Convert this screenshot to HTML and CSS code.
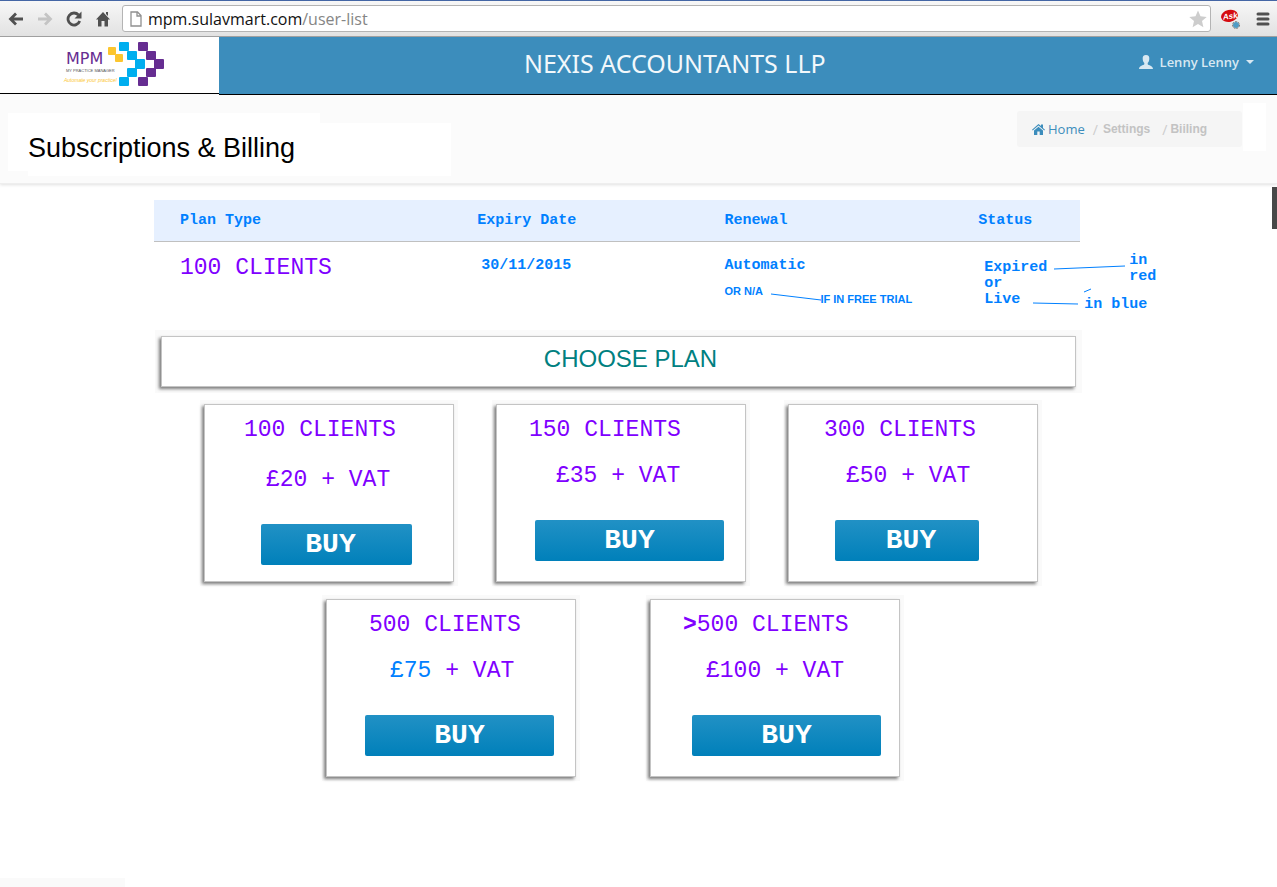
FILE: index.html
```html
<!DOCTYPE html>
<html lang="en">
<head>
<meta charset="utf-8">
<title>Subscriptions &amp; Billing</title>
<link rel="stylesheet" href="styles.css">
</head>
<body>
<div class="browser">
  <button class="browser-btn" aria-label="Back"><svg width="16" height="16" viewBox="0 0 16 16"><path d="M15 8H3M8 2.500L2.500 8L8 13.500" fill="none" stroke="#505050" stroke-width="2.800"/></svg></button>
  <button class="browser-btn" aria-label="Forward"><svg width="16" height="16" viewBox="0 0 16 16"><path d="M1 8H13M8 2.500L13.500 8L8 13.500" fill="none" stroke="#c4c4c4" stroke-width="2.800"/></svg></button>
  <button class="browser-btn" aria-label="Reload"><svg width="16" height="16" viewBox="0 0 16 16"><path d="M12.500 4A6 6 0 1 0 13.700 10" fill="none" stroke="#505050" stroke-width="2.800"/><path d="M15.500 0.500V7.500H8.500Z" fill="#505050"/></svg></button>
  <button class="browser-btn" aria-label="Home page"><svg width="16" height="16" viewBox="0 0 16 16"><path d="M8 1L15 8.500H13V15.500H9.500V10H6.500V15.500H3V8.500H1ZM11 1H13V5L11 3Z" fill="#505050"/></svg></button>
  <div class="address">
    <svg width="12" height="16" viewBox="0 0 12 16"><path d="M1 1H7.500L11 4.500V15H1ZM7 1V5H11" fill="#fff" stroke="#909090" stroke-width="1.300"/></svg>
    <span class="url">mpm.sulavmart.com<span class="url-path">/user-list</span></span>
    <svg class="star" width="18" height="18" viewBox="0 0 18 18"><path d="M9 0.500L11.500 6.300L17.700 6.900L13 11L14.400 17.200L9 13.900L3.600 17.200L5 11L0.300 6.900L6.500 6.300Z" fill="#cdcdcd"/></svg>
  </div>
  <svg class="ask" width="20" height="20" viewBox="0 0 20 20"><ellipse cx="8.500" cy="7" rx="8.500" ry="6" fill="#d50b10" transform="rotate(-12 8 7)"/><text x="2" y="10" class="ask-text" transform="rotate(-8 8 8)">Ask</text><circle cx="15" cy="16" r="3" fill="#4f9cc5"/><circle cx="15" cy="16" r="3.500" fill="none" stroke="#777" stroke-width="1" stroke-dasharray="2 1"/></svg>
  <button class="browser-btn" aria-label="Menu"><svg width="14" height="14" viewBox="0 0 14 14"><path d="M2 2H12M2 7H12M2 12H12" stroke="#505050" stroke-width="3" stroke-linecap="round"/></svg></button>
</div>

<header class="header">
  <a class="brand" href="#" aria-label="MPM My Practice Manager">
    <svg width="104" height="48" viewBox="62 40 104 48">
      <g fill="#fcc62f"><rect x="108" y="47" width="8" height="8" rx="1"/><rect x="115" y="54" width="8" height="8" rx="1"/></g>
      <g fill="#00aeef"><rect x="119" y="42" width="10" height="9" rx="1"/><rect x="127" y="51" width="10" height="9" rx="1"/><rect x="135" y="59" width="10" height="10" rx="1"/><rect x="127" y="68" width="10" height="9" rx="1"/><rect x="119" y="77" width="10" height="9" rx="1"/></g>
      <g fill="#662d91"><rect x="138" y="42" width="10" height="9" rx="1"/><rect x="146" y="51" width="10" height="9" rx="1"/><rect x="154" y="59" width="10" height="10" rx="1"/><rect x="146" y="68" width="10" height="9" rx="1"/><rect x="138" y="77" width="10" height="9" rx="1"/></g>
      <text class="logo-name" x="66" y="64">MPM</text>
      <text class="logo-sub" x="66" y="72">MY PRACTICE MANAGER</text>
      <text class="logo-tag" x="64" y="82">Automate your practice!</text>
    </svg>
  </a>
  <div class="topbar">
    <div class="company">NEXIS ACCOUNTANTS LLP</div>
    <button class="user">
      <svg width="14" height="14" viewBox="0 0 14 14"><path d="M7 0C9.500 0 10.500 1.600 10.300 4C10.200 6 9.500 7.200 8.700 8V9.300C9.500 10.500 13.800 10.600 14 14H0C0.200 10.600 4.500 10.500 5.300 9.300V8C4.500 7.200 3.800 6 3.700 4C3.500 1.600 4.500 0 7 0Z" fill="#d8e8f2"/></svg>
      <span>Lenny Lenny</span>
      <svg width="8" height="4" viewBox="0 0 8 4"><path d="M0 0H8L4 4Z" fill="#d8e8f2"/></svg>
    </button>
  </div>
</header>

<section class="page-head">
  <h1 class="title">Subscriptions &amp; Billing</h1>
  <div class="crumb-area">
    <nav class="crumbs" aria-label="Breadcrumb">
      <a class="crumb-home" href="#"><svg width="13" height="11" viewBox="0 0 13 11"><path d="M6.500 0L9 2V0.500H11V4L13 5.700L12.300 6.500L6.500 1.600L0.700 6.500L0 5.700ZM6.500 2.700L11 6.500V11H7.700V7.500H5.300V11H2V6.500Z" fill="#3c8dbc"/></svg> Home</a>
      <span class="sep">/</span>
      <span class="crumb">Settings</span>
      <span class="sep sep-last">/</span>
      <span class="crumb">Biiling</span>
    </nav>
  </div>
</section>

<main class="content">
  <div class="scroll-thumb"></div>
  <table class="plan-table">
    <thead>
      <tr><th class="col-plan">Plan Type</th><th class="col-expiry">Expiry Date</th><th class="col-renewal">Renewal</th><th class="col-status">Status</th></tr>
    </thead>
    <tbody>
      <tr>
        <td><span class="plan-name">100 CLIENTS</span></td>
        <td class="inset">30/11/2015</td>
        <td>
          <div>Automatic</div>
          <div class="remark">OR N/A</div>
          <svg class="note-line line-trial" width="50" height="8" viewBox="0 0 50 8"><path d="M0 1L50 7"/></svg>
          <span class="note remark note-trial">IF IN FREE TRIAL</span>
        </td>
        <td class="status">
          Expired<br>or<br>Live
          <svg class="note-line line-status" width="100" height="44" viewBox="0 0 100 44"><path d="M21 7L92 4M51 30L58 27M0 41L45 42"/></svg>
          <span class="note note-red">in<br>red</span>
          <span class="note note-blue">in blue</span>
        </td>
      </tr>
    </tbody>
  </table>

  <h2 class="choose">CHOOSE PLAN</h2>

  <div class="plans">
    <article class="card card-100">
      <h3 class="card-title">100 CLIENTS</h3>
      <p class="price">£20 + VAT</p>
      <button class="buy">BUY</button>
    </article>
    <article class="card card-150">
      <h3 class="card-title">150 CLIENTS</h3>
      <p class="price">£35 + VAT</p>
      <button class="buy">BUY</button>
    </article>
    <article class="card card-300">
      <h3 class="card-title">300 CLIENTS</h3>
      <p class="price">£50 + VAT</p>
      <button class="buy">BUY</button>
    </article>
  </div>
  <div class="plans plans-large">
    <article class="card card-500">
      <h3 class="card-title">500 CLIENTS</h3>
      <p class="price"><span class="accent">£75</span> + VAT</p>
      <button class="buy">BUY</button>
    </article>
    <article class="card card-over">
      <h3 class="card-title"><b>&gt;</b>500 CLIENTS</h3>
      <p class="price">£100 + VAT</p>
      <button class="buy">BUY</button>
    </article>
  </div>
  <div class="foot-strip"></div>
</main>
</body>
</html>
```

FILE: styles.css
```css
* { box-sizing: border-box; }

body {
  margin: 0;
  min-height: 100vh;
  display: flex;
  flex-direction: column;
  background: #fff;
  font-family: "Liberation Sans", Arial, sans-serif;
}

button { font: inherit; color: inherit; border: 0; padding: 0; background: none; cursor: pointer; }
a { text-decoration: none; }
h1, h2, h3, p { margin: 0; font-weight: 400; }
svg { display: block; flex: none; }

/* Browser toolbar */
.browser {
  display: flex;
  align-items: center;
  gap: 13px;
  height: 37px;
  padding: 0 7px 0 8px;
  border-top: 1px solid #4466a5;
  border-bottom: 1px solid #a0a0a0;
  background: linear-gradient(#f7f7f7, #e2e2e2);
}
.address {
  flex: 1;
  display: flex;
  align-items: center;
  gap: 6px;
  height: 27px;
  margin-left: -2px;
  padding: 0 3px 0 7px;
  border: 1px solid #b4b4b4;
  border-radius: 3px;
  background: #fff;
}
.url { flex: 1; font: 16px "Open Sans", sans-serif; color: #111; }
.url-path { color: #858585; }
.ask { margin: 0 2px 0 -3px; }
.ask-text { font: italic bold 8px "Liberation Sans", sans-serif; fill: #fff; }

/* Site header */
.header { display: flex; align-items: flex-start; }
.brand {
  display: flex;
  width: 219px;
  height: 57px;
  padding: 3px 0 0 62px;
  border-bottom: 1px solid #000;
}
.logo-name { font: 16px "DejaVu Sans", sans-serif; fill: #662d91; }
.logo-sub { font: 4px "Liberation Sans", sans-serif; fill: #555; }
.logo-tag { font: italic 5px "Liberation Sans", sans-serif; fill: #fcc62f; }
.topbar {
  flex: 1;
  display: flex;
  gap: 8px;
  height: 58px;
  padding-right: 23px;
  border-bottom: 1px solid #000;
  background: #3c8dbc;
}
.company {
  flex: 1;
  text-align: center;
  font: 25px/52px "Noto Sans", sans-serif;
  color: #f2f8fb;
}
.user {
  display: flex;
  align-items: center;
  gap: 7px;
  height: 50px;
  font: 600 13px "Open Sans", sans-serif;
  color: #d8e8f2;
}

/* Page heading */
.page-head {
  display: flex;
  justify-content: space-between;
  align-items: flex-start;
  height: 89px;
  padding: 8px 11px 0 8px;
  background: #fbfbfb;
  border-bottom: 1px solid #eee;
  box-shadow: 0 1px 3px rgba(0, 0, 0, 0.12);
}
.title {
  width: 443px;
  height: 63px;
  margin-top: 10px;
  padding-left: 20px;
  background:
    linear-gradient(#fff, #fff) 0 0 / 312px 58px no-repeat,
    linear-gradient(#fff, #fff) 20px 10px / 423px 53px no-repeat;
  font-size: 27px;
  line-height: 71px;
  color: #000;
}
.crumb-area {
  padding: 8px 24px 4px 0;
  background: linear-gradient(#fff, #fff) right / 23px 100% no-repeat;
}
.crumbs {
  display: flex;
  align-items: center;
  width: 225px;
  height: 36px;
  padding-left: 15px;
  border-radius: 3px;
  background: #f5f5f5;
}
.crumb-home { display: flex; align-items: center; gap: 3px; font: 13px "Open Sans", sans-serif; color: #3c8dbc; }
.sep { margin: 0 5px 0 8px; font: 14px "Open Sans", sans-serif; color: #ccc; }
.sep-last { margin: 0 3px 0 12px; }
.crumb { font-size: 12px; font-weight: 700; color: #c3c3c3; }

/* Current plan */
.content {
  flex: 1;
  display: flex;
  flex-direction: column;
  position: relative;
  padding: 16px 197px 0 154px;
}
.scroll-thumb { position: absolute; top: 3px; right: 0; width: 5px; height: 42px; background: #484848; }
.plan-table {
  width: 100%;
  border-collapse: collapse;
  table-layout: fixed;
  font: 700 15px/16px "Liberation Mono", "Courier New", monospace;
  color: #0080ff;
}
.plan-table th {
  height: 41px;
  padding: 2px 0 0 26px;
  text-align: left;
  background: #e6f0ff;
  border-bottom: 1px solid #c0c0c0;
}
.col-plan { width: 32.1%; }
.col-expiry { width: 26.7%; }
.col-renewal { width: 27.4%; }
.plan-table td { position: relative; height: 95px; padding: 16px 0 0 26px; vertical-align: top; white-space: nowrap; }
.plan-table .inset { padding-left: 30px; }
.plan-table .status { padding: 18px 0 0 32px; }
.plan-name { font-size: 23px; line-height: 20px; font-weight: 400; color: #8000ff; }
.remark { font: 700 11px/16px "Liberation Sans", Arial, sans-serif; }
div.remark { margin-top: 9px; }
.note { position: absolute; }
.note-trial { left: 122px; top: 49px; }
.note-red { left: 177px; top: 11px; }
.note-blue { left: 132px; top: 55px; }
.note-line { position: absolute; fill: none; stroke: #0080ff; }
.line-trial { left: 73px; top: 51px; }
.line-status { left: 81px; top: 20px; }

/* Plan picker */
.choose {
  margin: 0 4px 0 7px;
  height: 51px;
  padding-left: 24px;
  border: 1px solid #c4c4c4;
  background: #fff;
  box-shadow: -2px 2px 3px rgba(0, 0, 0, 0.5), 0 0 0 6px #fafafa;
  text-align: center;
  font-size: 24px;
  line-height: 44px;
  color: #008080;
}
.plans {
  display: flex;
  justify-content: center;
  gap: 42px;
  padding-left: 8px;
  margin-top: 17px;
}
.plans-large { gap: 74px; padding: 0 8px 0 0; }
.card {
  --title: 35px;
  --price: 59px;
  --price-gap: 22px;
  --buy: 38px;
  --buy-width: 189px;
  width: 250px;
  height: 178px;
  padding-top: 13px;
  border: 1px solid #c4c4c4;
  background: #fff;
  box-shadow: -2px 2px 3px rgba(0, 0, 0, 0.5), 0 0 0 4px #fafafa;
  font: 23px/24px "Liberation Mono", "Courier New", monospace;
  color: #8000ff;
}
.card-100 { --title: 39px; --price: 61px; --price-gap: 26px; --buy: 56px; --buy-width: 151px; }
.card-150 { --title: 32px; }
.card-300 { --price: 57px; --buy: 46px; --buy-width: 144px; }
.card-500 { --title: 42px; --price: 63px; }
.card-over { --title: 32px; --price: 55px; --buy: 41px; }
.card-title { font-size: 23px; padding-left: var(--title); }
.price { margin-top: var(--price-gap); padding-left: var(--price); }
.accent { color: #0080ff; }
.buy {
  display: block;
  width: var(--buy-width);
  height: 41px;
  margin: 32px 0 0 var(--buy);
  border-radius: 2px;
  background: linear-gradient(#2191c5, #0080ba);
  font-size: 28px;
  font-weight: 700;
  line-height: 38px;
  color: #fff;
}
.card-100 .buy { padding-right: 12px; }
.card-300 .buy { padding-left: 8px; }
.foot-strip { width: 125px; height: 9px; margin: auto 0 0 -154px; background: #fafafa; }
```
